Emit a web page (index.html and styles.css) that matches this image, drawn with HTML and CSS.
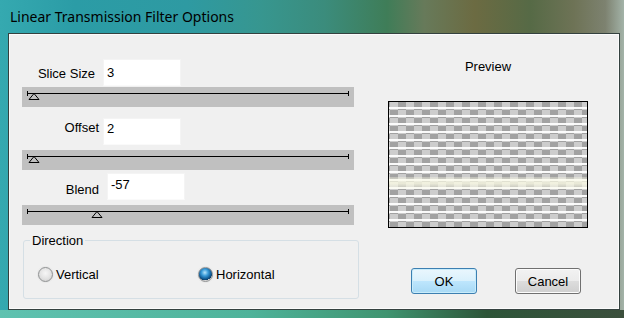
FILE: index.html
```html
<!DOCTYPE html>
<html lang="en">
<head>
  <meta charset="UTF-8" />
  <title>Linear Transmission Filter Options</title>
  <link rel="stylesheet" href="styles.css">
</head>
<body>
  <div class="window">
    <div class="titlebar">Linear Transmission Filter Options</div>
    <div class="client">
      <div class="left">
        <div class="row row-slice">
          <label>Slice Size</label>
          <div class="input">3</div>
        </div>
        <div class="slider">
          <div class="track"></div>
          <svg class="thumb" style="margin-left:6px" width="12" height="7" viewBox="0 0 12 7"><polygon points="1,6.5 6,0.5 11,6.5" fill="none" stroke="#000" stroke-width="1"/></svg>
        </div>

        <div class="row row-offset">
          <label>Offset</label>
          <div class="input">2</div>
        </div>
        <div class="slider">
          <div class="track"></div>
          <svg class="thumb" style="margin-left:6px" width="12" height="7" viewBox="0 0 12 7"><polygon points="1,6.5 6,0.5 11,6.5" fill="none" stroke="#000" stroke-width="1"/></svg>
        </div>

        <div class="row row-blend">
          <label>Blend</label>
          <div class="input">-57</div>
        </div>
        <div class="slider">
          <div class="track"></div>
          <svg class="thumb" style="margin-left:69px" width="12" height="7" viewBox="0 0 12 7"><polygon points="1,6.5 6,0.5 11,6.5" fill="none" stroke="#000" stroke-width="1"/></svg>
        </div>

        <fieldset class="group">
          <legend>Direction</legend>
          <div class="radios">
            <div class="radio-item"><span class="radio"></span>Vertical</div>
            <div class="radio-item"><span class="radio checked"></span>Horizontal</div>
          </div>
        </fieldset>
      </div>

      <div class="right">
        <div class="preview-label">Preview</div>
        <div class="preview"><div class="band"></div></div>
        <div class="buttons">
          <button class="btn btn-default">OK</button>
          <button class="btn">Cancel</button>
        </div>
      </div>
    </div>
  </div>
</body>
</html>
```

FILE: styles.css
```css
body { margin: 0; width: 624px; height: 318px; overflow: hidden; font-family: "Liberation Sans", Arial, sans-serif; font-size: 13px; color: #000; }

.window {
  height: 318px; box-sizing: border-box; display: flex; flex-direction: column; padding: 0 4px 8px 8px;
  background:
    linear-gradient(90deg, #5fc2b0 0%, #4eb39a 40%, #3f9470 62%, #2d5538 78%, #3b4f3c 100%) bottom / 100% 8px no-repeat,
    linear-gradient(90deg, #35a9b0 0%, #2b9ca6 12%, #2e9aa2 30%, #37968f 42%, #3b8c7c 52%, #3f7d58 62%, #677a5a 68%, #6c6b42 76%, #566a46 85%, #6e7356 92%, #7d8270 97%, #a3b3a8 100%);
}
.titlebar { height: 33px; margin-left: -8px; padding: 2px 0 0 10px; box-sizing: border-box; line-height: 30px; font-family: "Noto Sans", sans-serif; font-size: 14px; color: #000; }

.client { flex: 1; display: flex; background: #f0f0f0; border: 1px solid #34413f; box-shadow: inset 0 0 0 1px #fbfbfb; }

.left { width: 335px; padding: 25px 0 0 13px; }
.row { display: flex; align-items: flex-start; height: 27px; }
.row label { text-align: right; line-height: 15px; }
.input { width: 78px; height: 27px; box-sizing: border-box; background: #fff; border: 1px solid #f4f4f4; border-bottom-color: #fafafa; padding-left: 3px; line-height: 15px; }
.row-slice label { width: 73px; padding-top: 7px; }
.row-slice .input { margin-left: 8px; padding-top: 5px; }
.row-offset { margin-top: 11px; }
.row-offset label { width: 77px; padding-top: 2px; }
.row-offset .input { margin-left: 4px; padding-top: 2px; }
.row-blend { margin-top: 3px; }
.row-blend label { width: 77px; padding-top: 9px; }
.row-blend .input { margin-left: 8px; padding-top: 3px; }

.slider { width: 332px; height: 20px; background: #c0c0c0; margin-top: 1px; padding-top: 4px; box-sizing: border-box; }
.row-offset + .slider, .row-blend + .slider { margin-top: 5px; }
.track { height: 5px; margin: 0 5px; border-left: 1px solid #000; border-right: 1px solid #000; background: linear-gradient(#000, #000) center / 100% 1px no-repeat; }
.thumb { display: block; margin-top: -3px; }

.group { margin: 8px 0 0 1px; padding: 0; width: 335px; height: 66px; box-sizing: border-box; border: 1px solid #d5dfe5; border-radius: 3px; }
.group legend { margin-left: 6px; padding: 0 2px; line-height: 15px; }
.radios { display: flex; padding: 19px 0 0 14px; }
.radio-item { display: flex; align-items: center; gap: 3px; width: 160px; line-height: 15px; }
.radio { width: 15px; height: 15px; border-radius: 50%; box-sizing: border-box; border: 1px solid #8f9192; background: radial-gradient(circle at 50% 40%, #f6f6f6 0%, #e2e2e2 55%, #c9c9c9 100%); box-shadow: 0 0 0 1px #e8e8e8; }
.radio.checked { background: radial-gradient(circle at 45% 35%, #b6e4fb 0%, #3a9bd8 30%, #145f99 55%, #0c3f6a 68%, #d4d4d4 71%, #f2f2f2 100%); }

.right { flex: 1; }
.preview-label { margin-top: 25px; text-align: center; line-height: 15px; }
.preview {
  position: relative; width: 200px; height: 127px; box-sizing: border-box; margin: 27px 0 0 31px; border: 1px solid #000;
  background:
    repeating-linear-gradient(180deg, transparent 0 5px, rgba(255,255,255,0.95) 5px 7px, transparent 7px 8px),
    conic-gradient(#a2a2a2 25%, #cdcdcd 0 50%, #a2a2a2 0 75%, #cdcdcd 0) 1px 0 / 16px 16px;
}
.band { position: absolute; left: 0; right: 0; top: 75px; height: 12px; background: linear-gradient(180deg, rgba(250,250,230,0.3), rgba(250,250,228,0.85) 50%, rgba(250,250,230,0.3)); }

.buttons { display: flex; margin: 40px 0 0 54px; gap: 38px; }
.btn { width: 66px; height: 26px; font-family: "Liberation Sans", Arial, sans-serif; font-size: 13px; color: #000; border-radius: 3px; border: 1px solid #707070; background: linear-gradient(#f2f2f2, #ebebeb 50%, #dddddd 50%, #cfcfcf); box-shadow: inset 0 0 0 1px #fcfcfc; padding: 0; }
.btn-default { border-color: #3c7fb1; background: linear-gradient(#eaf6fd, #d9f0fc 50%, #bee6fd 50%, #a7d9f5); box-shadow: inset 0 0 0 1px #c8ecfb; }
```
